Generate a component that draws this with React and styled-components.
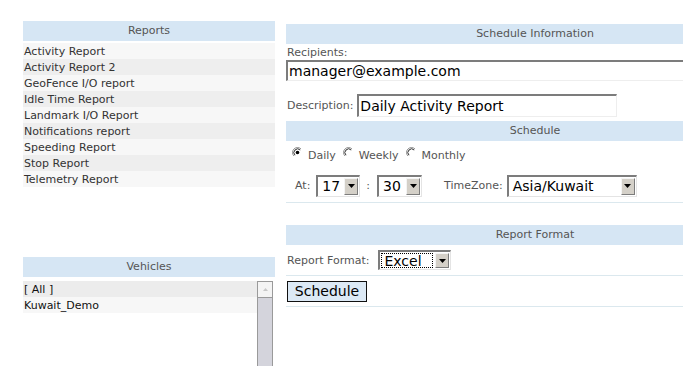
import React from "react";
import styled, { createGlobalStyle } from "styled-components";

const Global = createGlobalStyle`
  html, body { margin: 0; padding: 0; background: #fff; overflow: hidden; }
  body { font-family: "DejaVu Sans", Verdana, sans-serif; width: 683px; height: 366px; }
`;

const Page = styled.div`
  display: flex;
  align-items: flex-start;
  padding-left: 23px;
  width: 1200px;
`;

const LeftCol = styled.div`
  width: 252px;
  margin-top: 21px;
  display: flex;
  flex-direction: column;
`;

const RightCol = styled.div`
  width: 498px;
  margin-left: 11px;
  margin-top: 24px;
  display: flex;
  flex-direction: column;
`;

const Header = styled.div`
  height: 20px;
  line-height: 20px;
  background: #d6e6f4;
  color: #555;
  font-size: 11px;
  text-align: center;
  margin-top: ${(p) => p.$mt || 0}px;
`;

const List = styled.div`
  margin-top: 2px;
  display: flex;
  flex-direction: column;
`;

const ListItem = styled.div`
  height: 16px;
  line-height: 17px;
  font-size: 11px;
  color: #333;
  padding-left: 1px;
  background: ${(p) => (p.$alt ? "#eeeeee" : "#f7f7f7")};
`;

const VehicleBox = styled.div`
  margin-top: 4px;
  display: flex;
  height: 100px;
`;

const VehicleRows = styled.div`
  flex: 1;
  display: flex;
  flex-direction: column;
`;

const VehicleRow = styled.div`
  height: 16px;
  line-height: 17px;
  font-size: 11px;
  color: #111;
  padding-left: 1px;
  background: ${(p) => (p.$sel ? "#ececec" : "#f7f7f7")};
`;

const Scrollbar = styled.div`
  width: 14px;
  margin-right: 2px;
  border: 1px solid #9a9a9a;
  background: #d4d4dc;
  display: flex;
  flex-direction: column;
`;

const ScrollBtn = styled.div`
  height: 15px;
  background: #f4f4f4;
  border-bottom: 1px solid #9a9a9a;
  display: flex;
  align-items: center;
  justify-content: center;
`;

const Row = styled.div`
  display: flex;
  align-items: center;
  height: ${(p) => p.$h}px;
  padding-left: ${(p) => p.$pl || 1}px;
  padding-top: ${(p) => p.$pt || 0}px;
  padding-bottom: ${(p) => p.$pb || 0}px;
  border-bottom: ${(p) => (p.$line ? "1px solid #dbe8ee" : "none")};
`;

const Label = styled.span`
  font-size: 11px;
  color: #555;
  margin-right: ${(p) => p.$mr || 0}px;
  margin-left: ${(p) => p.$ml || 0}px;
`;

const TextInput = styled.div`
  box-sizing: border-box;
  height: ${(p) => p.$h}px;
  width: ${(p) => p.$w}px;
  border-top: 2px solid #7c7c7c;
  border-left: 2px solid #7c7c7c;
  border-right: 1px solid #eeeeee;
  border-bottom: 1px solid #eeeeee;
  font-size: 14px;
  color: #000;
  padding-left: 1px;
  display: flex;
  align-items: center;
`;

const SelectBox = styled.div`
  box-sizing: border-box;
  height: ${(p) => p.$h}px;
  width: ${(p) => p.$w}px;
  border-top: 2px solid #7c7c7c;
  border-left: 2px solid #7c7c7c;
  border-right: 1px solid #e4e4e4;
  border-bottom: 1px solid #e4e4e4;
  display: flex;
  align-items: center;
  padding: 1px;
  background: #fff;
`;

const SelectValue = styled.div`
  flex: 1;
  height: 100%;
  box-sizing: border-box;
  font-size: 14px;
  color: #000;
  padding-left: ${(p) => p.$pl || 3}px;
  display: flex;
  align-items: center;
  outline: ${(p) => (p.$focus ? "1px dotted #000" : "none")};
  outline-offset: -1px;
  margin-right: 2px;
`;

const ArrowBtn = styled.div`
  width: 14px;
  height: 100%;
  box-sizing: border-box;
  background: #d4d0c8;
  border-top: 1px solid #f4f4f4;
  border-left: 1px solid #f4f4f4;
  border-right: 1px solid #7c7c7c;
  border-bottom: 1px solid #7c7c7c;
  display: flex;
  align-items: center;
  justify-content: center;
`;

const Colon = styled.span`
  font-size: 11px;
  color: #555;
  margin: 0 7px 0 6px;
`;

const RadioLabel = styled.label`
  display: inline-flex;
  align-items: center;
  font-size: 11px;
  color: #555;
  margin-right: 7px;
  svg { margin-right: 5px; margin-top: -5px; }
`;

const Button = styled.button`
  height: 21px;
  width: 80px;
  background: #dce9f5;
  border: 1px solid #111;
  font-family: "DejaVu Sans", Verdana, sans-serif;
  font-size: 14px;
  color: #000;
  padding: 0;
`;

const Arrow = () => (
  <svg width="7" height="4" viewBox="0 0 7 4">
    <path d="M0 0h7L3.5 4z" fill="#000" />
  </svg>
);

const Select = ({ w, h, value, focus, pl }) => (
  <SelectBox $w={w} $h={h}>
    <SelectValue $focus={focus} $pl={pl}>{value}</SelectValue>
    <ArrowBtn>
      <Arrow />
    </ArrowBtn>
  </SelectBox>
);

const Radio = ({ checked }) => (
  <svg width="11" height="11" viewBox="0 0 11 11">
    <path d="M2 9 A4.5 4.5 0 0 1 9 2" fill="none" stroke="#8a8a8a" strokeWidth="1" />
    <path d="M3 8.2 A3.5 3.5 0 0 1 8.2 3" fill="none" stroke="#333" strokeWidth="1" />
    {checked && <circle cx="5.5" cy="5.5" r="1.8" fill="#000" />}
  </svg>
);

const reports = [
  "Activity Report",
  "Activity Report 2",
  "GeoFence I/O report",
  "Idle Time Report",
  "Landmark I/O Report",
  "Notifications report",
  "Speeding Report",
  "Stop Report",
  "Telemetry Report",
];

export default function App() {
  return (
    <>
      <Global />
      <Page>
        <LeftCol>
          <Header>Reports</Header>
          <List>
            {reports.map((r, i) => (
              <ListItem key={r} $alt={i % 2 === 1}>
                {r}
              </ListItem>
            ))}
          </List>
          <Header $mt={70}>Vehicles</Header>
          <VehicleBox>
            <VehicleRows>
              <VehicleRow $sel>[ All ]</VehicleRow>
              <VehicleRow>Kuwait_Demo</VehicleRow>
            </VehicleRows>
            <Scrollbar>
              <ScrollBtn>
                <svg width="5" height="3" viewBox="0 0 5 3">
                  <path d="M0 3L2.5 0L5 3z" fill="#c8c8c8" />
                </svg>
              </ScrollBtn>
            </Scrollbar>
          </VehicleBox>
        </LeftCol>

        <RightCol>
          <Header>Schedule Information</Header>
          <Row $h={16}>
            <Label>Recipients:</Label>
          </Row>
          <TextInput $w={500} $h={21}>manager@example.com</TextInput>
          <Row $h={23} $pt={13} $pb={4}>
            <Label $mr={4}>Description:</Label>
            <TextInput $w={260} $h={23}>Daily Activity Report</TextInput>
          </Row>
          <Header>Schedule</Header>
          <Row $h={28} $pl={6}>
            <RadioLabel><Radio checked />Daily</RadioLabel>
            <RadioLabel><Radio />Weekly</RadioLabel>
            <RadioLabel><Radio />Monthly</RadioLabel>
          </Row>
          <Row $h={33} $pl={9} $line>
            <Label $mr={6}>At:</Label>
            <Select w={44} h={22} value="17" />
            <Colon>:</Colon>
            <Select w={45} h={22} value="30" />
            <Label $ml={22} $mr={4}>TimeZone:</Label>
            <Select w={130} h={22} value="Asia/Kuwait" />
          </Row>
          <Header $mt={22}>Report Format</Header>
          <Row $h={30} $line>
            <Label $mr={9}>Report Format:</Label>
            <Select w={73} h={20} value="Excel" focus />
          </Row>
          <Row $h={30} $line>
            <Button>Schedule</Button>
          </Row>
        </RightCol>
      </Page>
    </>
  );
}
